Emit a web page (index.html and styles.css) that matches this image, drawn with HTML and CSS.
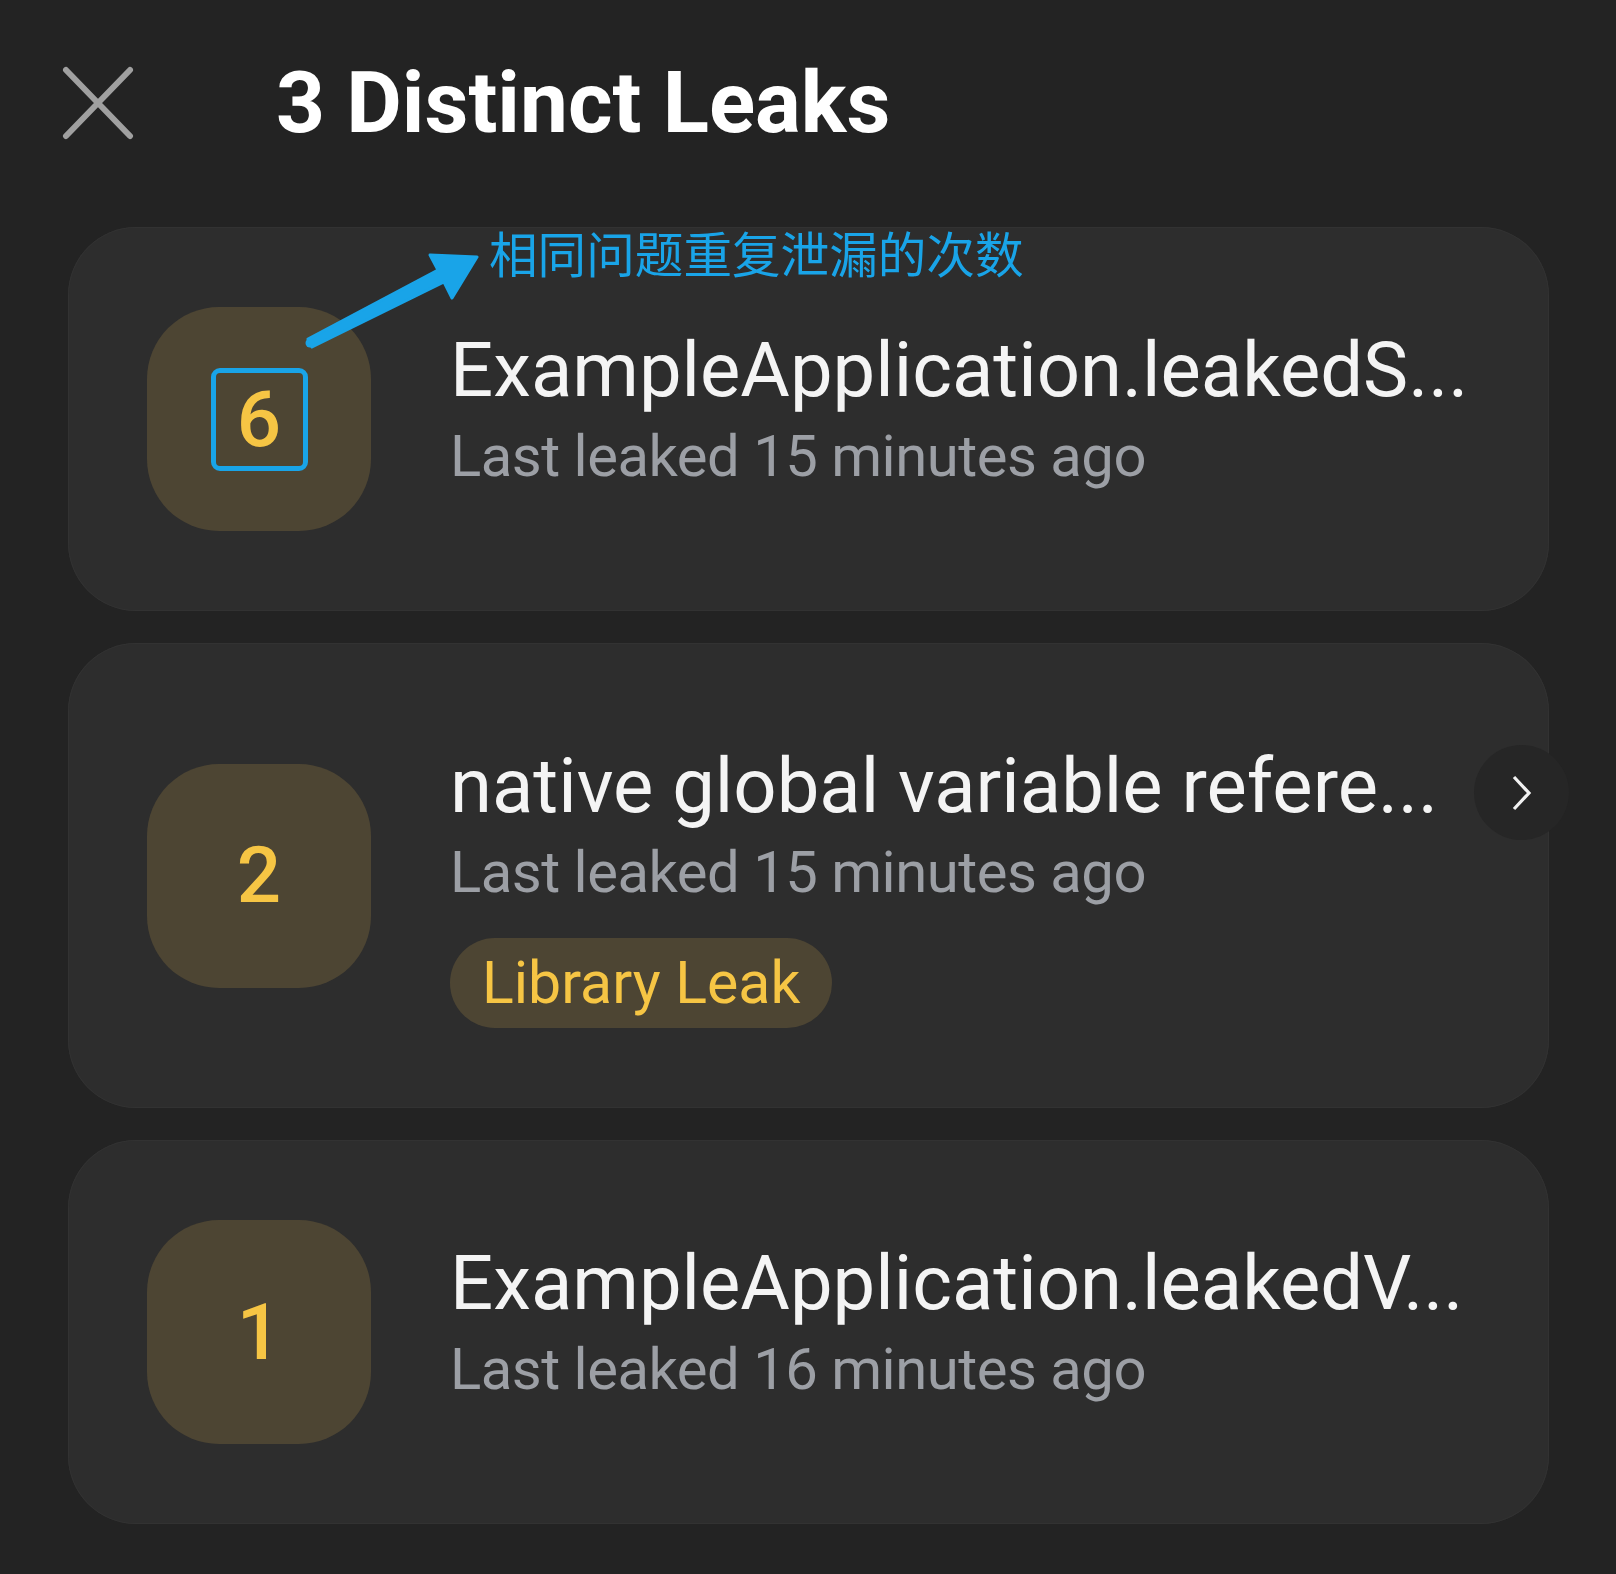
FILE: index.html
```html
<!DOCTYPE html>
<html lang="en">
<head>
<meta charset="UTF-8">
<meta name="viewport" content="width=device-width, initial-scale=1.0">
<title>3 Distinct Leaks</title>
<link rel="stylesheet" href="styles.css">
</head>
<body>
    <div class="header">
        <svg class="close" width="72" height="74" viewBox="0 0 72 74">
            <path d="M4 4 L68 70 M68 4 L4 70" stroke="#a0a0a0" stroke-width="6" stroke-linecap="round" fill="none"/>
        </svg>
        <h1>3 Distinct Leaks</h1>
    </div>

    <div class="list">
        <div class="card">
            <div class="count"><span class="marked">6</span></div>
            <div class="info">
                <div class="title">ExampleApplication.leakedS...</div>
                <div class="time">Last leaked 15 minutes ago</div>
            </div>

            <!-- annotation -->
            <svg class="arrow" width="420" height="130" viewBox="0 0 420 130">
                <polygon points="409,30 362,28 370,43 240,112 244,120 376,55 384,71" fill="#19a4e8" stroke="#19a4e8" stroke-width="3" stroke-linejoin="round"/>
                <circle cx="242" cy="116" r="4.5" fill="#19a4e8"/>
            </svg>
            <div class="note">相同问题重复泄漏的次数</div>
        </div>

        <div class="card">
            <div class="count">2</div>
            <div class="info">
                <div class="title">native global variable refere...</div>
                <div class="time">Last leaked 15 minutes ago</div>
                <span class="tag">Library Leak</span>
            </div>
            <div class="more">
                <svg width="22" height="38" viewBox="0 0 22 38">
                    <path d="M3 3 L18 19 L3 35" stroke="#f2f2f2" stroke-width="3.2" fill="none"/>
                </svg>
            </div>
        </div>

        <div class="card">
            <div class="count">1</div>
            <div class="info">
                <div class="title">ExampleApplication.leakedV...</div>
                <div class="time">Last leaked 16 minutes ago</div>
            </div>
        </div>
    </div>
</body>
</html>
```

FILE: styles.css
```css
body {
    margin: 0;
    background-color: #232323;
    font-family: Roboto, "Noto Sans", sans-serif;
    color: #f2f2f2;
}

.header {
    display: flex;
    align-items: center;
    height: 100px;
    padding: 53px 0 0 62px;
}

.close {
    flex: none;
}

.header h1 {
    margin: 0 0 0 142px;
    font-size: 85.5px;
    font-weight: 700;
    line-height: 100px;
    color: #ffffff;
}

.list {
    display: flex;
    flex-direction: column;
    gap: 32px;
    padding: 74px 67px 0 68px;
}

.card {
    position: relative;
    display: flex;
    align-items: flex-start;
    gap: 79px;
    padding: 80px 79px;
    background-color: #2d2d2d;
    border-radius: 68px;
    box-shadow: inset 0 0 0 1px #323232;
}

.count {
    flex: none;
    align-self: center;
    width: 224px;
    height: 224px;
    border-radius: 72px;
    background-color: #4d4533;
    color: #f6c544;
    font-size: 78px;
    font-weight: 500;
    display: flex;
    align-items: center;
    justify-content: center;
}

.marked {
    display: flex;
    align-items: center;
    justify-content: center;
    box-sizing: border-box;
    width: 97px;
    height: 103px;
    border: 5px solid #19a4e8;
    border-radius: 9px;
}

.info {
    display: flex;
    flex-direction: column;
    align-items: flex-start;
    min-width: 0;
}

.title {
    padding-top: 18px;
    font-size: 76px;
    line-height: 90px;
    white-space: nowrap;
    color: #f4f4f4;
}

.time {
    font-size: 58px;
    line-height: 82px;
    letter-spacing: -0.5px;
    color: #9c9fa5;
    white-space: nowrap;
}

.tag {
    margin-top: 25px;
    padding: 0 32px;
    height: 90px;
    line-height: 90px;
    border-radius: 45px;
    background-color: #4d4533;
    color: #f6c544;
    font-size: 59px;
}

.more {
    position: absolute;
    top: 102px;
    right: -20px;
    width: 95px;
    height: 95px;
    border-radius: 50%;
    background-color: #262626;
    display: flex;
    align-items: center;
    justify-content: center;
}

.arrow {
    position: absolute;
    left: 0;
    top: 0;
}

.note {
    position: absolute;
    left: 421px;
    top: 1px;
    font-family: "Noto Sans CJK SC", sans-serif;
    font-size: 48.6px;
    line-height: 48px;
    color: #19a4e8;
    white-space: nowrap;
}
```
